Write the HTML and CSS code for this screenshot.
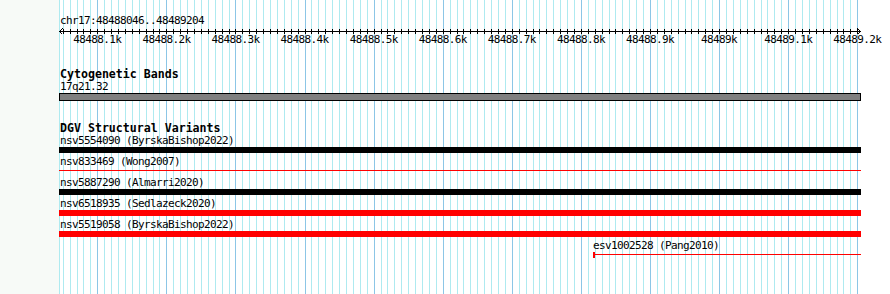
FILE: index.html
```html
<!DOCTYPE html>
<html>
<head>
<meta charset="utf-8">
<title>Genome view</title>
<link rel="stylesheet" href="styles.css">
</head>
<body>
<div class="page">
  <div class="sidebar"></div>
  <div class="view">
    <svg class="grid" id="grid" width="802" height="294" xmlns="http://www.w3.org/2000/svg"></svg>
    <div class="content">
      <div class="locus">chr17:48488046..48489204</div>
      <svg class="axis" id="axis" width="802" height="7" xmlns="http://www.w3.org/2000/svg">
        <rect class="axis-line" x="0" y="4" width="802" height="1"/>
        <path class="arrow" d="M3.5 1.5 L0.5 4.5 L3.5 7.5"/>
        <path class="arrow" d="M798.5 1.5 L801.5 4.5 L798.5 7.5"/>
      </svg>
      <div class="scale">
        <span class="scale-label" style="left:38.3px">48488.1k</span>
        <span class="scale-label" style="left:107.4px">48488.2k</span>
        <span class="scale-label" style="left:176.5px">48488.3k</span>
        <span class="scale-label" style="left:245.6px">48488.4k</span>
        <span class="scale-label" style="left:314.7px">48488.5k</span>
        <span class="scale-label" style="left:383.8px">48488.6k</span>
        <span class="scale-label" style="left:452.8px">48488.7k</span>
        <span class="scale-label" style="left:521.9px">48488.8k</span>
        <span class="scale-label" style="left:591.0px">48488.9k</span>
        <span class="scale-label" style="left:660.1px">48489k</span>
        <span class="scale-label" style="left:729.2px">48489.1k</span>
        <span class="scale-label" style="left:798.3px">48489.2k</span>
      </div>

      <section class="track track-bands">
        <div class="track-title">Cytogenetic Bands</div>
        <div class="feat-label">17q21.32</div>
        <div class="band"></div>
      </section>

      <section class="track track-dgv">
        <div class="track-title">DGV Structural Variants</div>
        <div class="feature">
          <div class="feat-label">nsv5554090 (ByrskaBishop2022)</div>
          <div class="bar bar-black"></div>
        </div>
        <div class="feature">
          <div class="feat-label">nsv833469 (Wong2007)</div>
          <div class="bar bar-thin"></div>
        </div>
        <div class="feature">
          <div class="feat-label">nsv5887290 (Almarri2020)</div>
          <div class="bar bar-black"></div>
        </div>
        <div class="feature">
          <div class="feat-label">nsv6518935 (Sedlazeck2020)</div>
          <div class="bar bar-red"></div>
        </div>
        <div class="feature">
          <div class="feat-label">nsv5519058 (ByrskaBishop2022)</div>
          <div class="bar bar-red"></div>
        </div>
        <div class="feature" style="margin-left:534px">
          <div class="feat-label feat-label-flush">esv1002528 (Pang2010)</div>
          <div class="bar-span">
            <div class="span-start"></div>
            <div class="span-line"></div>
          </div>
        </div>
      </section>
    </div>
  </div>
  <div class="rightpad"></div>
</div>
<script src="script.js"></script>
</body>
</html>
```

FILE: styles.css
```css
html, body {
  margin: 0;
  padding: 0;
  background: #ffffff;
}

.page {
  display: flex;
  width: 890px;
  height: 294px;
  overflow: hidden;
  font-family: "DejaVu Sans Mono", "Liberation Mono", monospace;
  font-size: 11px;
  letter-spacing: -0.62px;
  color: #000;
}

.sidebar {
  width: 59px;
  flex: 0 0 59px;
  background: #f7faf7;
}

.view {
  position: relative;
  width: 802px;
  flex: 0 0 802px;
  height: 294px;
}

.rightpad {
  flex: 1 1 auto;
  background: #ffffff;
}

.grid {
  position: absolute;
  top: 0;
  left: 0;
  z-index: 0;
  shape-rendering: crispEdges;
}

.grid .minor { fill: #aeeaf0; }
.grid .major { fill: #8cc6e6; }

.content {
  position: relative;
  z-index: 1;
  padding-top: 15px;
}

.locus {
  line-height: 12px;
  height: 12px;
  padding-left: 1px;
  white-space: nowrap;
}

.axis {
  display: block;
  overflow: visible;
  shape-rendering: crispEdges;
}

.axis-line, .axis .tick { fill: #000; }

.arrow {
  fill: none;
  stroke: #000;
  stroke-width: 1;
}

.scale {
  position: relative;
  height: 12px;
  line-height: 12px;
}

.scale-label {
  position: absolute;
  top: 0;
  transform: translateX(-50%);
  white-space: nowrap;
}

.track {
  display: flex;
  flex-direction: column;
}

.track-bands { margin-top: 22px; }
.track-dgv { margin-top: 21px; }

.track-title {
  font-weight: bold;
  font-size: 11.6px;
  letter-spacing: 0;
  line-height: 13px;
  height: 13px;
  padding-left: 1px;
  white-space: nowrap;
}

.feat-label {
  line-height: 12px;
  height: 12px;
  padding-left: 1px;
  white-space: nowrap;
}

.feat-label-flush { padding-left: 0; }

.band {
  height: 6px;
  background: #808080;
  border: 1px solid #000;
}

.feature {
  display: flex;
  flex-direction: column;
  margin-bottom: 3px;
}

.bar { height: 6px; }
.bar-black { background: #000; }
.bar-red { background: #ff0000; }
.bar-thin {
  height: 1px;
  margin: 2px 0 3px;
  background: #ff0000;
}

.bar-span {
  display: flex;
  height: 6px;
}

.span-start {
  width: 2px;
  height: 6px;
  background: #ff0000;
}

.span-line {
  flex: 1 1 auto;
  height: 1px;
  margin-top: 2px;
  background: #ff0000;
}
```

FILE: script.js
```js
(function () {
  var NS = 'http://www.w3.org/2000/svg';
  var grid = document.getElementById('grid');
  var axis = document.getElementById('axis');
  var ORIGIN = 48488100, ORIGIN_X = 38.3, SCALE = 0.6909;

  function rect(svg, x, y, w, h, cls) {
    var r = document.createElementNS(NS, 'rect');
    r.setAttribute('x', x);
    r.setAttribute('y', y);
    r.setAttribute('width', w);
    r.setAttribute('height', h);
    r.setAttribute('class', cls);
    svg.appendChild(r);
  }

  rect(grid, 0, 0, 1, 294, 'minor');
  for (var bp = 48488050; bp <= 48489200; bp += 10) {
    var x = Math.round(ORIGIN_X + (bp - ORIGIN) * SCALE);
    var major = bp % 100 === 0;
    rect(grid, x, 0, 1, 294, major ? 'major' : 'minor');
    rect(axis, x, 2, 1, 5, 'tick');
  }
})();
```
